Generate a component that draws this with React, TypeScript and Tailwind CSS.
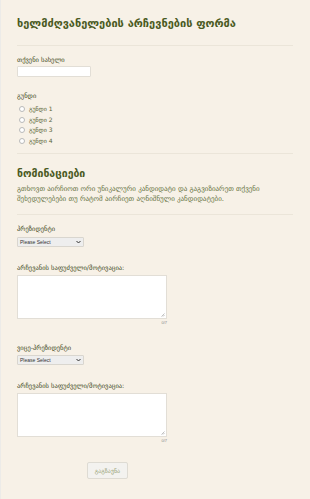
import React from 'react'

const font = { fontFamily: '"DejaVu Sans", "Noto Sans", sans-serif' }

function Divider({ className = '' }: { className?: string }) {
  return <div className={`h-px bg-[#ebe5d9] ${className}`} />
}

function Label({ children, className = '' }: { children: React.ReactNode; className?: string }) {
  return <div className={`h-[10px] text-[6.5px] leading-[10px] text-[#3f4a22] ${className}`}>{children}</div>
}

function FakeSelect({ className = '' }: { className?: string }) {
  return (
    <div
      className={`flex h-[10px] w-[67px] items-center justify-between rounded-[1px] border border-[#d9d6cf] bg-[#eeeeee] pl-[2px] pr-[2px] ${className}`}
    >
      <span className="text-[5px] leading-none text-[#333]" style={{ fontFamily: '"Liberation Sans", Arial, sans-serif' }}>
        Please Select
      </span>
      <svg width="5" height="4" viewBox="0 0 10 8">
        <path d="M1 2 L5 6 L9 2" fill="none" stroke="#333" strokeWidth="2" />
      </svg>
    </div>
  )
}

function FakeTextarea({ className = '' }: { className?: string }) {
  return (
    <div className={`w-[150px] ${className}`}>
      <div className="relative h-[44px] w-[150px] border border-[#e2ded6] bg-white">
        <svg className="absolute bottom-[1px] right-[1px]" width="5" height="5" viewBox="0 0 10 10">
          <path d="M9 3 L3 9 M9 6 L6 9" stroke="#999" strokeWidth="1.2" />
        </svg>
      </div>
      <div className="mt-[1px] h-[6px] text-right text-[4px] leading-[6px] text-[#888]" style={{ fontFamily: '"Liberation Sans", Arial, sans-serif' }}>
        0/7
      </div>
    </div>
  )
}

function Radio({ label }: { label: string }) {
  return (
    <div className="flex h-[10.5px] items-center gap-[4px] pl-[2px]">
      <span className="h-[6px] w-[6px] rounded-full border border-[#b9b9b9] bg-white" />
      <span className="text-[6px] leading-none text-[#5b6638]">{label}</span>
    </div>
  )
}

export default function App() {
  return (
    <div className="min-h-[499px] w-[310px] border-l border-[#ecebe8] bg-[#f7f1e7] pl-[16px] pr-[17px]" style={font}>
      <div className="pt-[16px]">
        <h1 className="h-[16px] text-[11px] font-bold leading-[16px] text-[#4a5a22]">
          ხელმძღვანელების არჩევნების ფორმა
        </h1>
      </div>
      <Divider className="mt-[13px]" />

      <Label className="mt-[9px]">თქვენი სახელი</Label>
      <div className="mt-[1px] h-[11px] w-[74px] rounded-[1px] border border-[#e2ded6] bg-white" />

      <Label className="mt-[14px]">გუნდი</Label>
      <div className="mt-[3px]">
        <Radio label="გუნდი 1" />
        <Radio label="გუნდი 2" />
        <Radio label="გუნდი 3" />
        <Radio label="გუნდი 4" />
      </div>
      <Divider className="mt-[7px]" />

      <h2 className="mt-[10px] h-[18px] text-[10.5px] font-bold leading-[18px] text-[#4a5a22]">ნომინაციები</h2>
      <p className="mt-[2px] text-[7px] leading-[10px] text-[#66713f]">
        გთხოვთ აირჩიოთ ორი უნიკალური კანდიდატი და გაგვიზიარეთ თქვენი
        <br />
        შეხედულებები თუ რატომ აირჩიეთ აღნიშნული კანდიდატები.
      </p>
      <Divider className="mt-[10px]" />

      <Label className="mt-[9px]">პრეზიდენტი</Label>
      <FakeSelect className="mt-[3px]" />

      <Label className="mt-[16px]">არჩევანის საფუძველი/მოტივაცია:</Label>
      <FakeTextarea className="mt-[2px]" />

      <Label className="mt-[17px]">ვიცე-პრეზიდენტი</Label>
      <FakeSelect className="mt-[2px]" />

      <Label className="mt-[16px]">არჩევანის საფუძველი/მოტივაცია:</Label>
      <FakeTextarea className="mt-[2px]" />

      <div className="mt-[18px] flex pl-[70px] pb-[17px]">
        <button className="h-[17px] w-[41px] rounded-[2px] border border-[#dedbd3] bg-[#f3f2ef] text-[6px] text-[#9aa57a]">
          გაგზავნა
        </button>
      </div>
    </div>
  )
}
